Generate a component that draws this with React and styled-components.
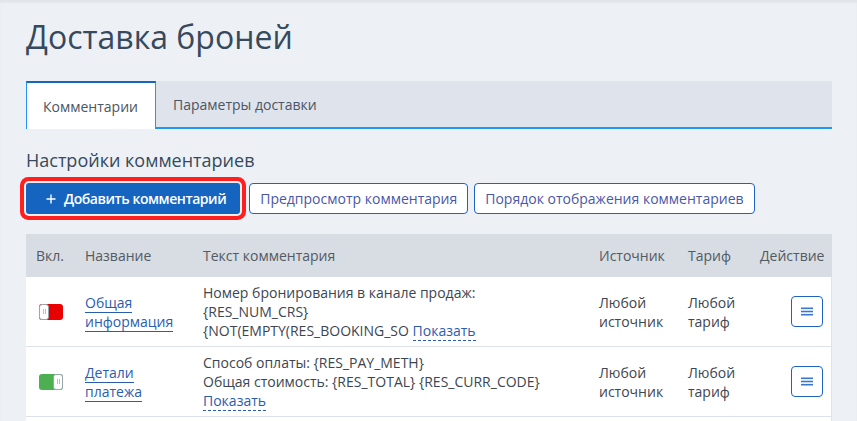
import React from 'react';
import styled, { createGlobalStyle } from 'styled-components';

const GlobalStyle = createGlobalStyle`
  html, body {
    margin: 0;
    padding: 0;
    background: #edf1f5;
    font-family: "Open Sans", "Liberation Sans", sans-serif;
    color: #3c4652;
  }
`;

const Page = styled.div`
  padding: 0 25px 0 26px;
  border-top: 2px solid #e2e6eb;
  box-shadow: inset 0 1px 2px rgba(0, 0, 0, 0.04);
`;

const Title = styled.h1`
  margin: 12px 0 21px;
  font-size: 32px;
  line-height: 46px;
  font-weight: 400;
  color: #37495c;
`;

const TabBar = styled.div`
  display: flex;
  height: 48px;
  box-sizing: border-box;
  background: #dfe3ec;
  border-bottom: 2px solid #2196f3;
`;

const Tab = styled.div`
  display: flex;
  align-items: center;
  padding: 0 17px 0 ${p => (p.$active ? '16px' : '17px')};
  font-size: 14px;
  color: #4b5563;
  box-sizing: border-box;
  ${p => p.$active && `
    background: #fff;
    margin-bottom: -2px;
    border-top: 2px solid #1565c0;
    border-left: 1px solid #2196f3;
    border-right: 1px solid #2196f3;
  `}
`;

const SectionTitle = styled.h2`
  margin: 19px 0 11px;
  font-size: 18px;
  line-height: 24px;
  font-weight: 400;
  color: #37495c;
`;

const Toolbar = styled.div`
  display: flex;
  align-items: center;
  margin-bottom: 20px;
`;

const PrimaryButton = styled.button`
  display: flex;
  align-items: center;
  gap: 8px;
  height: 31px;
  padding: 0 14px 0 20px;
  margin-right: 9px;
  border: none;
  border-radius: 3px;
  background: #1565c0;
  color: #fff;
  font-family: inherit;
  font-size: 14px;
  font-weight: 600;
  letter-spacing: -0.45px;
  box-shadow: 0 0 0 2px #edf1f5, 0 0 0 6px #ff1f1f;
`;

const OutlineButton = styled.button`
  height: 31px;
  padding: 0 10px;
  margin-right: 6px;
  border: 1px solid #1e63c4;
  border-radius: 4px;
  background: #fff;
  color: #4a57a8;
  font-family: inherit;
  font-size: 14px;
`;

const TableWrap = styled.div`
  background: #fff;
  border-right: 1px solid #dfe3e8;
  padding-bottom: 12px;
`;

const Table = styled.table`
  width: 806px;
  border-collapse: collapse;
  table-layout: fixed;
`;

const HeadCell = styled.th`
  height: 43px;
  padding: 0 10px;
  background: #d8dce3;
  font-size: 14px;
  font-weight: 400;
  color: #525a64;
  text-align: ${p => p.$align || 'left'};
`;

const Row = styled.tr`
  border-bottom: 1px solid #dde2e8;
`;

const Cell = styled.td`
  padding: 6px ${p => p.$padRight || '10px'} 6px 10px;
  font-size: 14px;
  line-height: 19px;
  color: #3c4652;
  vertical-align: middle;
  text-align: ${p => p.$align || 'left'};
`;

const Track = styled.span`
  display: flex;
  justify-content: ${p => (p.$on ? 'flex-end' : 'flex-start')};
  width: 24px;
  height: 16px;
  margin-left: 3px;
  border-radius: 3px;
  background: ${p => (p.$on ? '#4caf50' : '#e90000')};
`;

const Knob = styled.span`
  display: flex;
  align-items: center;
  justify-content: center;
  gap: 1px;
  width: 10px;
  height: 16px;
  box-sizing: border-box;
  border: 1px solid #9aa5ae;
  border-radius: 3px;
  background: #fff;
`;

const Grip = styled.span`
  width: 1px;
  height: 5px;
  background: #b8c0c6;
`;

const NameLink = styled.a`
  color: #2a5db0;
  text-decoration: none;
  border-bottom: 1px solid #2a5db0;
`;

const ShowLink = styled.a`
  color: #2a5db0;
  text-decoration: none;
  border-bottom: 1px dashed #2a5db0;
`;

const ActionButton = styled.button`
  display: inline-flex;
  align-items: center;
  justify-content: center;
  width: 32px;
  height: 31px;
  padding: 0;
  border: 1px solid #1e63c4;
  border-radius: 4px;
  background: #fff;
`;

const Toggle = ({ on }) => (
  <Track $on={on}>
    <Knob>
      <Grip />
      <Grip />
    </Knob>
  </Track>
);

const MenuIcon = () => (
  <svg width="12" height="9" viewBox="0 0 12 9">
    <rect x="0" y="0.5" width="12" height="1.6" fill="#3a76cc" />
    <rect x="0" y="3.7" width="12" height="1.6" fill="#3a76cc" />
    <rect x="0" y="6.9" width="12" height="1.6" fill="#3a76cc" />
  </svg>
);

const PlusIcon = () => (
  <svg width="10" height="10" viewBox="0 0 10 10">
    <path d="M5 0.5v9M0.5 5h9" stroke="#fff" strokeWidth="1.4" />
  </svg>
);

const rows = [
  {
    on: false,
    name: ['Общая', 'информация'],
    text: [
      'Номер бронирования в канале продаж:',
      '{RES_NUM_CRS}',
      '{NOT(EMPTY(RES_BOOKING_SO',
    ],
    inlineShow: true,
  },
  {
    on: true,
    name: ['Детали', 'платежа'],
    text: ['Способ оплаты: {RES_PAY_METH}', 'Общая стоимость: {RES_TOTAL} {RES_CURR_CODE}'],
    inlineShow: false,
  },
];

export default function App() {
  return (
    <Page>
      <GlobalStyle />
      <Title>Доставка броней</Title>
      <TabBar>
        <Tab $active>Комментарии</Tab>
        <Tab>Параметры доставки</Tab>
      </TabBar>
      <SectionTitle>Настройки комментариев</SectionTitle>
      <Toolbar>
        <PrimaryButton>
          <PlusIcon />
          Добавить комментарий
        </PrimaryButton>
        <OutlineButton>Предпросмотр комментария</OutlineButton>
        <OutlineButton>Порядок отображения комментариев</OutlineButton>
      </Toolbar>
      <TableWrap>
        <Table>
          <colgroup>
            <col style={{ width: 49 }} />
            <col style={{ width: 118 }} />
            <col style={{ width: 396 }} />
            <col style={{ width: 89 }} />
            <col style={{ width: 72 }} />
            <col style={{ width: 82 }} />
          </colgroup>
          <thead>
            <tr>
              <HeadCell>Вкл.</HeadCell>
              <HeadCell>Название</HeadCell>
              <HeadCell>Текст комментария</HeadCell>
              <HeadCell>Источник</HeadCell>
              <HeadCell>Тариф</HeadCell>
              <HeadCell $align="right">Действие</HeadCell>
            </tr>
          </thead>
          <tbody>
            {rows.map((r, i) => (
              <Row key={i}>
                <Cell>
                  <Toggle on={r.on} />
                </Cell>
                <Cell>
                  <NameLink>{r.name[0]}</NameLink>
                  <br />
                  <NameLink>{r.name[1]}</NameLink>
                </Cell>
                <Cell>
                  {r.text.map((t, j) => (
                    <div key={j}>
                      {t}
                      {r.inlineShow && j === r.text.length - 1 && (
                        <> <ShowLink>Показать</ShowLink></>
                      )}
                    </div>
                  ))}
                  {!r.inlineShow && (
                    <div>
                      <ShowLink>Показать</ShowLink>
                    </div>
                  )}
                </Cell>
                <Cell>
                  Любой
                  <br />
                  источник
                </Cell>
                <Cell>
                  Любой
                  <br />
                  тариф
                </Cell>
                <Cell $align="right" $padRight="9px">
                  <ActionButton>
                    <MenuIcon />
                  </ActionButton>
                </Cell>
              </Row>
            ))}
          </tbody>
        </Table>
      </TableWrap>
    </Page>
  );
}
